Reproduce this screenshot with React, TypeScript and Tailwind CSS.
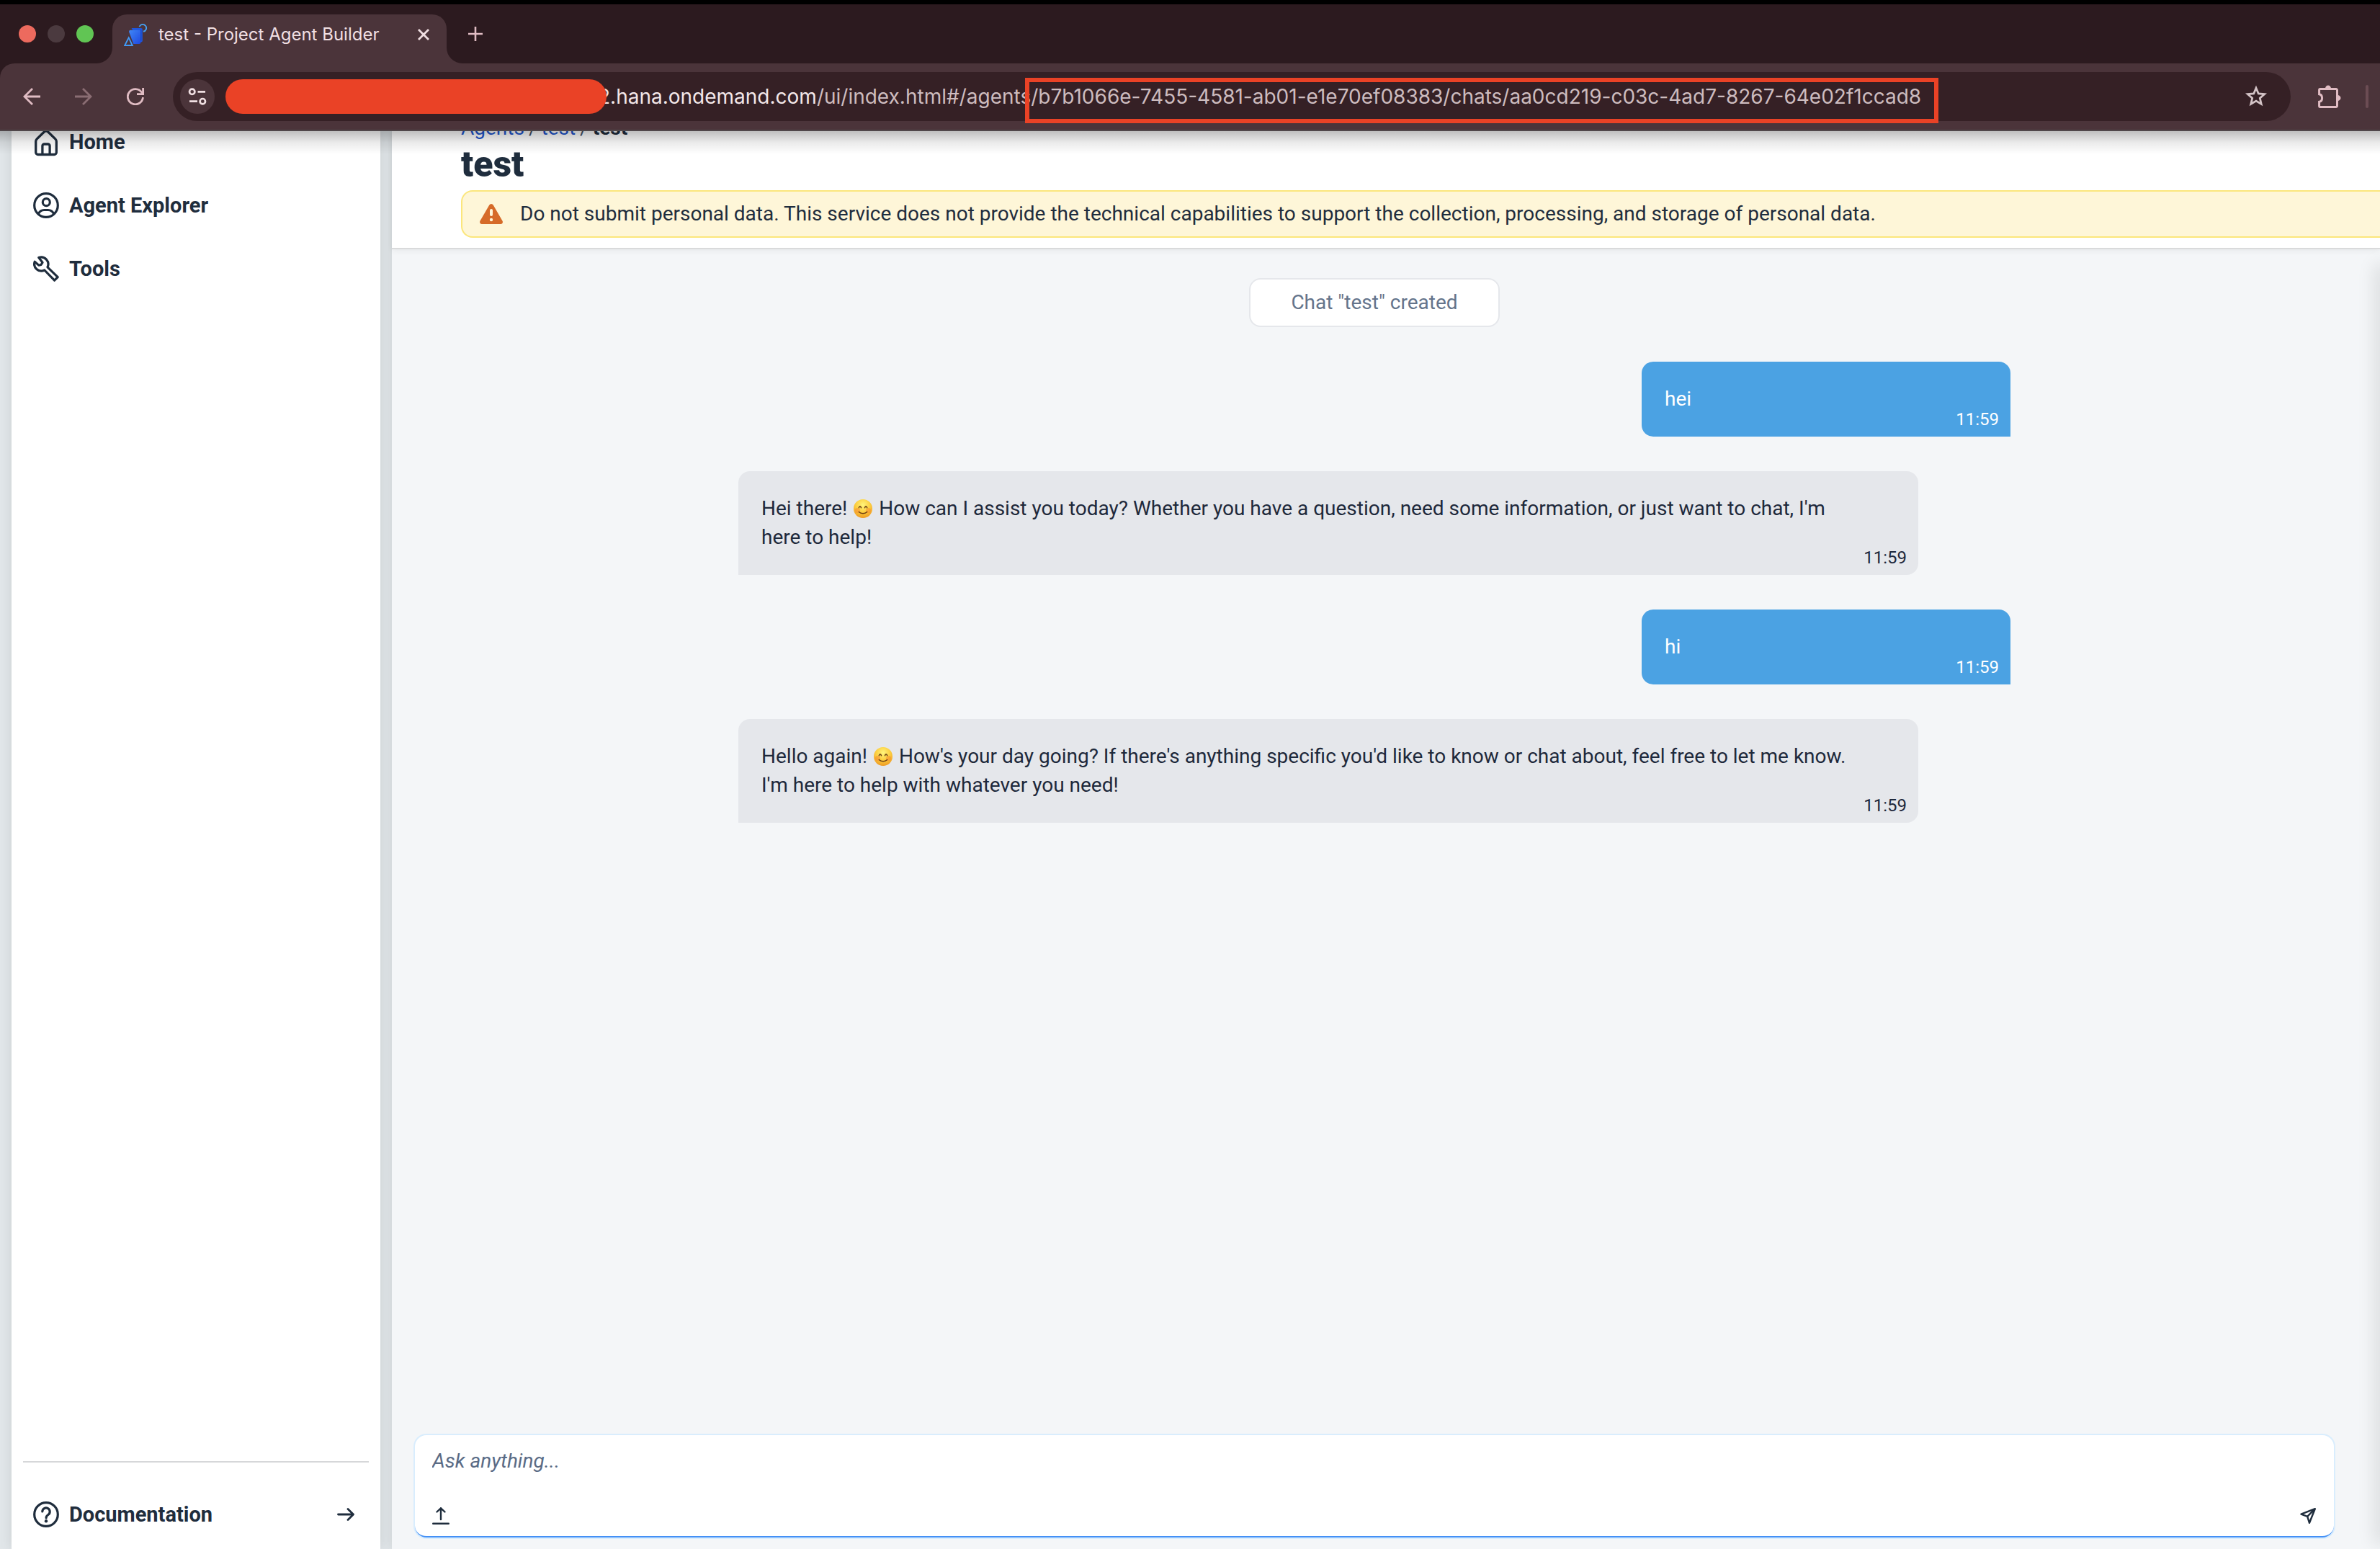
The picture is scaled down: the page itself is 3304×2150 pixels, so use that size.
import React from "react";

function BackArrow() {
  return (
    <svg className="size-6" viewBox="0 0 24 24" fill="none" stroke="currentColor" strokeWidth="2.8">
      <path d="M24 12H2.5M13 1 2 12l11 11" />
    </svg>
  );
}

function ForwardArrow() {
  return (
    <svg className="size-6" viewBox="0 0 24 24" fill="none" stroke="currentColor" strokeWidth="2.8">
      <path d="M0 12h21.500M11 1l11 11-11 11" />
    </svg>
  );
}

function ReloadIcon() {
  return (
    <svg className="size-6" viewBox="0 0 24 24" fill="none" stroke="currentColor" strokeWidth="2.8">
      <path d="M22.500 13.200A10.600 10.600 0 1 1 20.600 6L22.600 8.600" />
      <path d="M22.600 0v8.600H14" />
    </svg>
  );
}

function TuneIcon() {
  return (
    <svg className="size-7" viewBox="0 0 28 28" fill="none" stroke="currentColor" strokeWidth="2.700">
      <circle cx="6.700" cy="7.300" r="3.700" />
      <path d="M14.500 7.300H25M3 20.700h11" />
      <circle cx="21.300" cy="20.700" r="3.700" />
    </svg>
  );
}

function StarIcon() {
  return (
    <svg className="size-8" viewBox="0 0 32 32" fill="none" stroke="currentColor" strokeWidth="2.800">
      <path d="M16 4.200l3.300 7.800 8.300.7-6.300 5.500 1.900 8.200L16 22.100l-7.200 4.300 1.900-8.200-6.300-5.500 8.300-.7z" />
    </svg>
  );
}

function PuzzleIcon() {
  return (
    <svg className="size-8" viewBox="0 0 32 32" fill="none" stroke="currentColor" strokeWidth="3">
      <path d="M1.600 7A1.500 1.500 0 0 1 3 5.500h22A1.500 1.500 0 0 1 26.500 7v22a1.500 1.500 0 0 1-1.500 1.500H3A1.500 1.500 0 0 1 1.600 29v-5.700c2.500-.4 4-2.600 4-5.300s-1.500-4.900-4-5.300z" />
      <path d="M10 5a4 4.500 0 0 1 8 0zM27 14a4.500 4 0 0 1 0 8z" fill="currentColor" stroke="none" />
    </svg>
  );
}

function Favicon() {
  return (
    <svg className="size-8 shrink-0" viewBox="0 0 32 32" fill="none" aria-hidden="true">
      <defs>
        <linearGradient id="card" x1="0" y1="0" x2="1" y2="1">
          <stop offset="0" stopColor="#3f86f6" />
          <stop offset="1" stopColor="#1f49df" />
        </linearGradient>
      </defs>
      <path d="M21.500 5A5 5 0 1 1 27 11.800" stroke="#46a2f3" strokeWidth="1.900" />
      <path d="M10.500 7h13.300a2 2 0 0 1 2 2v15.500a2 2 0 0 1-2 2H23" fill="#1f55dd" />
      <path d="M9 9.700h12.500a1.800 1.800 0 0 1 1.800 1.800V27a2 2 0 0 1-2 2h-8L7.200 12.500V11.500A1.800 1.800 0 0 1 9 9.700z" fill="url(#card)" />
      <path d="M23.800 9.500v15" stroke="#173fae" strokeWidth="0.8" />
      <path d="M7 17.500 15 32.500H-1z" fill="#4b343a" />
      <path d="M6.700 20.300 11.800 31H1.200z" stroke="#419af5" strokeWidth="1.900" />
    </svg>
  );
}

function HomeIcon() {
  return (
    <svg className="size-9 overflow-visible" viewBox="0 0 36 36" fill="none" stroke="currentColor" strokeWidth="3.300">
      <path d="M3.700 32.500V17.500c0-1.500.5-2.600 1.500-3.600L15.300 4c1.500-1.400 3.900-1.400 5.400 0l10.100 9.900c1 1 1.500 2.100 1.500 3.600v15a3 3 0 0 1-3 3H6.700a3 3 0 0 1-3-3z" />
      <path d="M12.900 35.500V23.500a2.500 2.500 0 0 1 2.500-2.500h5.200a2.500 2.500 0 0 1 2.500 2.500v12" />
    </svg>
  );
}

function PersonIcon() {
  return (
    <svg className="size-9" viewBox="0 0 36 36" fill="none" stroke="currentColor" strokeWidth="3.200">
      <circle cx="18" cy="18" r="16.300" />
      <circle cx="18.300" cy="13.700" r="5" />
      <path d="M7.300 30c1.600-3.600 4.500-5.500 8-5.500h5.400c3.500 0 6.400 1.900 8 5.500" />
    </svg>
  );
}

function WrenchIcon() {
  return (
    <svg className="size-9" viewBox="0 0 36 36" fill="none" stroke="currentColor" strokeWidth="3.200" strokeLinejoin="round">
      <path d="M7.800 2.600A9.700 9.700 0 0 1 20 15.800L34.200 29.600 29.600 34.200 15.800 20A9.700 9.700 0 0 1 2.200 8.200l5.600 4.900 3.200-.6 2-3.200z" />
    </svg>
  );
}

function HelpIcon() {
  return (
    <svg className="size-9" viewBox="0 0 36 36" fill="none" stroke="currentColor" strokeWidth="3.200">
      <circle cx="18" cy="18" r="16.300" />
      <path d="M12.800 14a5.200 5.200 0 1 1 8 4.500c-1.900 1.200-2.700 2-2.700 4.300" strokeLinecap="round" />
      <circle cx="18" cy="27.300" r="2.200" fill="currentColor" stroke="none" />
    </svg>
  );
}

function GoIcon() {
  return (
    <svg className="size-6" viewBox="0 0 24 24" fill="none" stroke="currentColor" strokeWidth="2.800" strokeLinecap="round" strokeLinejoin="round">
      <path d="M1.500 12h21M15 4.500l7.500 7.500-7.500 7.500" />
    </svg>
  );
}

function WarningIcon() {
  return (
    <svg className="h-7 w-8 shrink-0" viewBox="0 0 32 28" aria-hidden="true">
      <path d="M13.300 1.600a3.100 3.100 0 0 1 5.400 0l12.900 22.200c1 1.900-.3 4.200-2.500 4.200H2.900C.7 28-.6 25.700.4 23.800z" fill="#d66b29" />
      <rect x="14" y="7" width="4" height="10" rx="2" fill="#fff6d8" />
      <circle cx="16" cy="22" r="2.200" fill="#fff6d8" />
    </svg>
  );
}

function UploadIcon() {
  return (
    <svg className="size-6" viewBox="0 0 24 24" fill="none" stroke="currentColor" strokeWidth="2.400" strokeLinecap="round" strokeLinejoin="round">
      <path d="M12 17V1.300M6.500 6.500 12 1.300l5.500 5.200M1.200 22.800h21.600" />
    </svg>
  );
}

function SendIcon() {
  return (
    <svg className="size-6" viewBox="0 0 24 24" fill="none" stroke="currentColor" strokeWidth="2.400" strokeLinecap="round" strokeLinejoin="round">
      <path d="M2.500 9.700 21.800 2.200 14 21.800l-2.800-9zM11.200 12.800 21.800 2.200" />
    </svg>
  );
}

function Smile() {
  return (
    <svg className="mx-[2px] inline-block size-[26px] align-[-4px]" viewBox="0 0 26 26" role="img" aria-label="😊">
      <defs>
        <radialGradient id="face" cx="0.5" cy="0.3" r="0.7">
          <stop offset="0" stopColor="#fff47c" />
          <stop offset="0.55" stopColor="#fcce3f" />
          <stop offset="1" stopColor="#ee9a22" />
        </radialGradient>
      </defs>
      <circle cx="13" cy="13" r="13" fill="url(#face)" />
      <circle cx="5.500" cy="15.500" r="3.600" fill="#f58a33" opacity="0.5" />
      <circle cx="20.500" cy="15.500" r="3.600" fill="#f58a33" opacity="0.5" />
      <path d="M7.300 11.800C8 9 9.800 9 10.500 11.800M15.500 11.800c.7-2.800 2.500-2.800 3.200 0" fill="none" stroke="#6d3f12" strokeWidth="1.500" strokeLinecap="round" />
      <path d="M7.300 17.500c3 3 8.400 3 11.400 0" fill="none" stroke="#6d3f12" strokeWidth="1.500" strokeLinecap="round" />
    </svg>
  );
}

function BrowserChrome() {
  return (
    <header className="relative z-10 shrink-0 border-b-2 border-[#50474a] bg-[#4b343a] font-['Inter',sans-serif]">
      <div className="flex h-[88px] items-end border-t-[6px] border-black bg-[#2c1a1f]">
        <div className="flex items-center gap-4 self-center pl-[26px]">
          <button aria-label="Close window" className="size-6 rounded-full bg-[#ed6a5e]" />
          <button aria-label="Minimize window" className="size-6 rounded-full bg-[#4b3a3f]" />
          <button aria-label="Zoom window" className="size-6 rounded-full bg-[#61c554]" />
        </div>
        <div className="ml-1 size-[22px] bg-[#4b343a]">
          <div className="size-full rounded-br-[22px] bg-[#2c1a1f]" />
        </div>
        <div className="flex h-[68px] w-[464px] items-start rounded-t-[20px] bg-[#4b343a] pt-3 pr-4 pl-4">
          <Favicon />
          <span className="ml-4 flex-1 text-[24px] leading-8 whitespace-nowrap text-[#f0dfe2]">test - Project Agent Builder</span>
          <button aria-label="Close tab" className="flex size-8 items-center justify-center text-[#f0dfe2]">
            <svg className="size-4" viewBox="0 0 16 16" fill="none" stroke="currentColor" strokeWidth="2.800">
              <path d="M1 1l14 14M15 1 1 15" />
            </svg>
          </button>
        </div>
        <div className="size-[22px] bg-[#4b343a]">
          <div className="size-full rounded-bl-[22px] bg-[#2c1a1f]" />
        </div>
        <button aria-label="New tab" className="ml-2 flex size-5 items-center justify-center self-center text-[#e0bcc3]">
          <svg className="size-5" viewBox="0 0 20 20" fill="none" stroke="currentColor" strokeWidth="2.600">
            <path d="M10 0v20M0 10h20" />
          </svg>
        </button>
      </div>
      <div className="bg-[#2c1a1f]">
        <div className="flex h-[92px] items-center rounded-tl-[20px] bg-[#4b343a] pl-8 text-[#e0bcc3]">
          <button aria-label="Back" className="mr-12"><BackArrow /></button>
          <button aria-label="Forward" className="mr-12 text-[#8a6d73]"><ForwardArrow /></button>
          <button aria-label="Reload" className="mr-10"><ReloadIcon /></button>
          <div className="flex h-[68px] min-w-0 flex-1 items-center rounded-full bg-[#352025] pr-8 pl-[10px]">
            <button aria-label="View site information" className="flex size-12 shrink-0 items-center justify-center rounded-full bg-[#4b343a] text-[#f0dfe2]">
              <TuneIcon />
            </button>
            <div className="z-10 ml-[15px] h-12 w-[529px] shrink-0 rounded-full bg-[#ea4226]" />
            <div role="textbox" aria-label="Address" className="-ml-3 flex-1 text-[28px] leading-10 whitespace-nowrap text-[#cdbcbf]">
              <span className="text-[#f3e7e9]">2.hana.ondemand.com</span>/ui/index.html#/agents
              <span className="relative">
                /b7b1066e-7455-4581-ab01-e1e70ef08383/chats/aa0cd219-c03c-4ad7-8267-64e02f1ccad8
                <span className="absolute -top-[9px] -right-6 -bottom-5 -left-2 border-6 border-[#ea4226]" />
              </span>
            </div>
            <button aria-label="Bookmark this tab" className="shrink-0 text-[#d3c3c6]"><StarIcon /></button>
          </div>
          <button aria-label="Extensions" className="ml-[38px]"><PuzzleIcon /></button>
          <div className="mr-4 ml-[34px] h-8 w-1 rounded-full bg-[#6b4c53]" />
        </div>
      </div>
      <div className="pointer-events-none absolute inset-x-0 top-full mt-0.5 h-8 bg-linear-to-b from-black/25 via-black/8 to-transparent" />
    </header>
  );
}

const NAV = [
  { label: "Home", icon: <HomeIcon /> },
  { label: "Agent Explorer", icon: <PersonIcon /> },
  { label: "Tools", icon: <WrenchIcon /> },
];

function Sidebar() {
  return (
    <aside className="z-0 flex w-[512px] shrink-0 flex-col bg-white text-[29px] font-bold text-[#1f2d3d] shadow-[0_0_16px_rgba(0,0,0,0.10)]">
      <nav className="-mt-[29px] flex flex-col">
        {NAV.map((item) => (
          <a key={item.label} href="#" className="flex h-[88px] items-center gap-[14px] pl-[30px]">
            {item.icon}
            {item.label}
          </a>
        ))}
      </nav>
      <div className="mx-4 mt-auto border-t-2 border-[#d6d7d9]" />
      <a href="#" className="mt-7 mb-1 flex h-[88px] items-center gap-[14px] pr-9 pl-[30px]">
        <HelpIcon />
        <span className="flex-1">Documentation</span>
        <GoIcon />
      </a>
    </aside>
  );
}

function UserMessage({ text }: { text: string }) {
  return (
    <div className="relative w-[512px] self-end rounded-2xl rounded-br-none bg-[#4ba2e3] p-8 text-white">
      <p>{text}</p>
      <time className="absolute right-4 bottom-2 text-[24px] leading-8">11:59</time>
    </div>
  );
}

function AgentMessage({ children }: { children: React.ReactNode }) {
  return (
    <div className="relative w-[1638px] self-start rounded-2xl rounded-bl-none bg-[#e5e7eb] p-8 pr-24 text-[#1e293b]">
      <p>{children}</p>
      <time className="absolute right-4 bottom-2 text-[24px] leading-8">11:59</time>
    </div>
  );
}

export default function App() {
  return (
    <div className="flex h-screen flex-col overflow-hidden bg-[#e1e6e9] font-['Roboto',sans-serif] text-[28px] leading-10">
      <BrowserChrome />
      <div className="flex min-h-0 flex-1 gap-4 overflow-hidden pl-4">
        <Sidebar />
        <main className="relative flex min-w-0 flex-1 flex-col bg-[#f4f6f8] shadow-[0_0_16px_rgba(0,0,0,0.10)]">
          <div className="z-[1] border-b-2 border-[#d9dadb] bg-white pb-[14px] pl-24 shadow-[0_2px_8px_rgba(0,0,0,0.06)]">
            <nav aria-label="Breadcrumb" className="-mt-6 flex gap-[6px] text-[#475569]">
              <a href="#" className="text-[#1f57cf]">Agents</a>/
              <a href="#" className="text-[#1f57cf]">test</a>/
              <span className="font-bold text-[#1f2d3d]">test</span>
            </nav>
            <h1 className="text-[50px] leading-[60px] font-black text-[#1f2d3d]">test</h1>
            <div role="alert" className="mt-[6px] flex h-[66px] items-center gap-6 rounded-l-2xl border-2 border-r-0 border-[#fbe67c] bg-[#fef6d8] pl-6 whitespace-nowrap text-[#1f2d3d]">
              <WarningIcon />
              Do not submit personal data. This service does not provide the technical capabilities to support the collection, processing, and storage of personal data.
            </div>
          </div>
          <section aria-label="Chat" className="flex min-h-0 flex-1 flex-col pr-8">
            <div className="mx-auto flex w-full max-w-[1766px] flex-1 flex-col gap-12 pt-10">
              <div className="self-center rounded-2xl border-2 border-[#e5e7eb] bg-white px-14 py-3 text-[#64748b]">Chat "test" created</div>
              <UserMessage text="hei" />
              <AgentMessage>
                Hei there! <Smile /> How can I assist you today? Whether you have a question, need some information, or just want to chat, I'm here to help!
              </AgentMessage>
              <UserMessage text="hi" />
              <AgentMessage>
                Hello again! <Smile /> How's your day going? If there's anything specific you'd like to know or chat about, feel free to let me know. I'm here to help with whatever you need!
              </AgentMessage>
            </div>
          </section>
          <form className="mr-16 mb-4 ml-8 flex flex-col rounded-2xl border-b-2 border-[#4490f6] bg-white pt-4 pr-6 pb-4 pl-6 text-[#1f2d3d] shadow-[0_0_0_2px_#d9edfd]">
            <textarea
              aria-label="Message"
              rows={1}
              placeholder="Ask anything..."
              className="h-10 w-full resize-none overflow-hidden outline-none placeholder:text-[#5a6b85] placeholder:italic"
            />
            <div className="mt-11 flex items-center justify-between">
              <button type="button" aria-label="Upload file"><UploadIcon /></button>
              <button type="button" aria-label="Send"><SendIcon /></button>
            </div>
          </form>
          <div className="pointer-events-none absolute top-[190px] -right-2 bottom-3 w-2 rounded-full shadow-[0_0_24px_8px_rgba(0,0,0,0.10)]" />
        </main>
      </div>
    </div>
  );
}
